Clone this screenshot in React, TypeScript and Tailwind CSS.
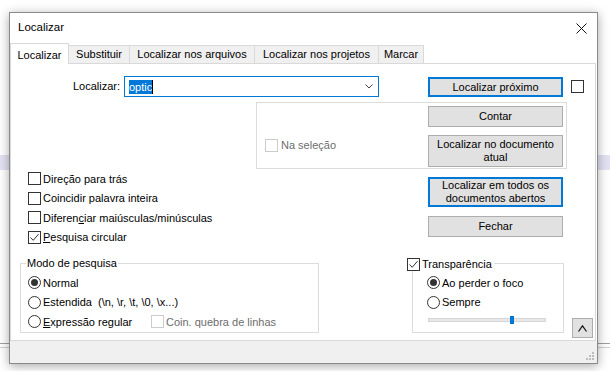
import { ReactNode } from "react";

function Check({ checked = false, disabled = false }: { checked?: boolean; disabled?: boolean }) {
  return (
    <span
      className={`flex h-[13px] w-[13px] shrink-0 items-center justify-center border bg-white ${
        disabled ? "border-[#cccccc]" : "border-[#333333]"
      }`}
    >
      {checked && (
        <svg width="11" height="11" viewBox="0 0 11 11">
          <path d="M1.5 5.5 L4.2 8.3 L9.5 2.2" fill="none" stroke="#333333" strokeWidth="1" />
        </svg>
      )}
    </span>
  );
}

function Radio({ on = false }: { on?: boolean }) {
  return (
    <span className="flex h-[13px] w-[13px] shrink-0 items-center justify-center rounded-full border border-[#333333] bg-white">
      {on && <span className="h-[7px] w-[7px] rounded-full bg-[#333333]" />}
    </span>
  );
}

function Btn({ children, focus = false, className = "" }: { children: ReactNode; focus?: boolean; className?: string }) {
  return (
    <div
      className={`flex w-[135px] shrink-0 items-center justify-center bg-[#e1e1e1] text-center leading-[13px] ${
        focus ? "border-2 border-[#0078d7]" : "border border-[#adadad]"
      } ${className}`}
    >
      {children}
    </div>
  );
}

function Row({ children, className = "" }: { children: ReactNode; className?: string }) {
  return <div className={`flex h-[19.5px] items-center gap-[2px] ${className}`}>{children}</div>;
}

export default function App() {
  const tabs = [
    { label: "Substituir", w: "w-[61px]" },
    { label: "Localizar nos arquivos", w: "w-[125px]" },
    { label: "Localizar nos projetos", w: "w-[124px]" },
    { label: "Marcar", w: "w-[45px]" },
  ];

  return (
    <div className="relative h-[371px] w-[610px] overflow-hidden bg-white font-['Liberation_Sans',Arial,sans-serif] text-[11px] text-black">
      {/* desktop behind the dialog */}
      <div className="absolute left-0 top-[155px] h-[15px] w-full bg-[#e2e2f3]" />
      <div className="absolute left-0 top-[343px] h-px w-full bg-[#a0a0a0]" />
      <div className="absolute left-0 top-[347px] h-px w-full bg-[#cfcfcf]" />

      <div className="relative ml-[9px] mt-[12px] flex h-[352px] w-[589px] flex-col border border-[#8a8a8a] bg-white shadow-[0_2px_10px_rgba(0,0,0,0.35)]">
        {/* title bar */}
        <div className="flex h-[30px] shrink-0 items-center justify-between pl-[8px] pr-[10px]">
          <span className="text-[11.5px]">Localizar</span>
          <svg width="11" height="11" viewBox="0 0 11 11">
            <path d="M0.5 0.5 L10.5 10.5 M10.5 0.5 L0.5 10.5" stroke="#111" strokeWidth="1" />
          </svg>
        </div>

        {/* tabs */}
        <div className="flex h-[20px] shrink-0 items-end">
          <div className="relative z-10 -mb-px flex h-[21px] w-[59px] items-start justify-center border-x border-t border-[#d9d9d9] bg-white pt-[3px]">
            Localizar
          </div>
          {tabs.map((t) => (
            <div
              key={t.label}
              className={`flex h-[18px] ${t.w} items-center justify-center border-r border-t border-[#d9d9d9] bg-[#f0f0f0]`}
            >
              {t.label}
            </div>
          ))}
        </div>

        {/* tab page */}
        <div className="h-[278px] w-[586px] shrink-0 border border-[#d9d9d9] bg-white">
          {/* search line */}
          <div className="mt-[12px] flex h-[21px] items-start">
            <span className="w-[109px] text-right leading-[21px]">Localizar:</span>
            <div className="ml-[4px] flex h-[21px] w-[255px] items-center justify-between border border-[#0078d7] pr-[5px]">
              <span className="ml-[4px] flex items-center">
                <span className="bg-[#0078d7] leading-[14px] text-white">optic</span>
                <span className="h-[14px] w-px bg-black" />
              </span>
              <svg width="8" height="5" viewBox="0 0 8 5">
                <path d="M0.5 0.5 L4 4 L7.5 0.5" fill="none" stroke="#444" strokeWidth="1" />
              </svg>
            </div>
            <Btn focus className="ml-[49px] mt-px h-[20px]">
              Localizar próximo
            </Btn>
            <span className="ml-[8px] mt-[4px]">
              <Check />
            </span>
          </div>

          {/* selection group */}
          <div className="ml-[245px] mt-[5px] flex h-[67px] w-[311px] border border-[#dcdcdc]">
            <div className="w-[171px] pl-[8px] pt-[36px]">
              <div className="flex h-[13px] items-center gap-[3px] text-[#6d6d6d]">
                <Check disabled />
                <span>Na seleção</span>
              </div>
            </div>
            <div className="flex flex-col">
              <Btn className="mt-[3px] h-[21px]">Contar</Btn>
              <Btn className="mt-[8px] h-[32px]">
                Localizar no documento
                <br />
                atual
              </Btn>
            </div>
          </div>

          {/* options + more buttons */}
          <div className="flex">
            <div className="ml-[17px] w-[400px]">
              <Row>
                <Check />
                <span>Direção para trás</span>
              </Row>
              <Row>
                <Check />
                <span>Coincidir palavra inteira</span>
              </Row>
              <Row>
                <Check />
                <span>
                  Diferen<span className="underline">c</span>iar maiúsculas/minúsculas
                </span>
              </Row>
              <Row>
                <Check checked />
                <span>
                  <span className="underline">P</span>esquisa circular
                </span>
              </Row>
            </div>
            <div className="flex flex-col">
              <Btn focus className="mt-[8px] h-[30px]">
                Localizar em todos os
                <br />
                documentos abertos
              </Btn>
              <Btn className="mt-[9px] h-[21px]">Fechar</Btn>
            </div>
          </div>

          {/* bottom groups */}
          <div className="mt-[16px] flex items-start">
            <div className="relative ml-[9px] h-[70px] w-[299px] border border-[#dcdcdc] pl-[7px] pt-[9px]">
              <span className="absolute -top-[8px] left-[5px] bg-white px-px leading-[15px]">Modo de pesquisa</span>
              <Row>
                <Radio on />
                <span>Normal</span>
              </Row>
              <Row>
                <Radio />
                <span>Estendida&nbsp; (\n, \r, \t, \0, \x...)</span>
              </Row>
              <Row>
                <Radio />
                <span className="w-[106px]">
                  <span className="underline">E</span>xpressão regular
                </span>
                <Check disabled />
                <span className="text-[#6d6d6d]">Coin. quebra de linhas</span>
              </Row>
            </div>

            <div className="relative ml-[93px] h-[70px] w-[152px] border border-[#dcdcdc] pl-[14px] pt-[9px]">
              <div className="absolute -left-[6px] -top-[6px] flex items-center gap-[2px] bg-white pr-[2px]">
                <Check checked />
                <span className="leading-[13px]">Transparência</span>
              </div>
              <Row>
                <Radio on />
                <span>Ao perder o foco</span>
              </Row>
              <Row>
                <Radio />
                <span>Sempre</span>
              </Row>
              <div className="relative ml-px mt-[6px] h-[4px] w-[118px] border border-[#d6d6d6] bg-[#e7e7e7]">
                <span className="absolute -top-[3px] left-[81px] h-[8px] w-[4px] bg-[#0078d7]" />
              </div>
            </div>

            <div className="ml-[8px] mt-[55px] flex h-[20px] w-[21px] items-center justify-center border border-[#adadad] bg-[#e1e1e1]">
              <svg width="9" height="7" viewBox="0 0 9 7">
                <path d="M0.5 6.5 L4.5 0.8 L8.5 6.5" fill="none" stroke="#111" strokeWidth="1.2" />
              </svg>
            </div>
          </div>
        </div>

        {/* status strip with grip */}
        <div className="flex flex-1 items-end justify-end bg-[#f0f0f0] pb-[2px] pr-[2px]">
          <svg width="9" height="9" viewBox="0 0 9 9">
            <g fill="#bdbdbd">
              <rect x="6" y="0" width="2" height="2" />
              <rect x="3" y="3" width="2" height="2" />
              <rect x="6" y="3" width="2" height="2" />
              <rect x="0" y="6" width="2" height="2" />
              <rect x="3" y="6" width="2" height="2" />
              <rect x="6" y="6" width="2" height="2" />
            </g>
          </svg>
        </div>
      </div>
    </div>
  );
}
